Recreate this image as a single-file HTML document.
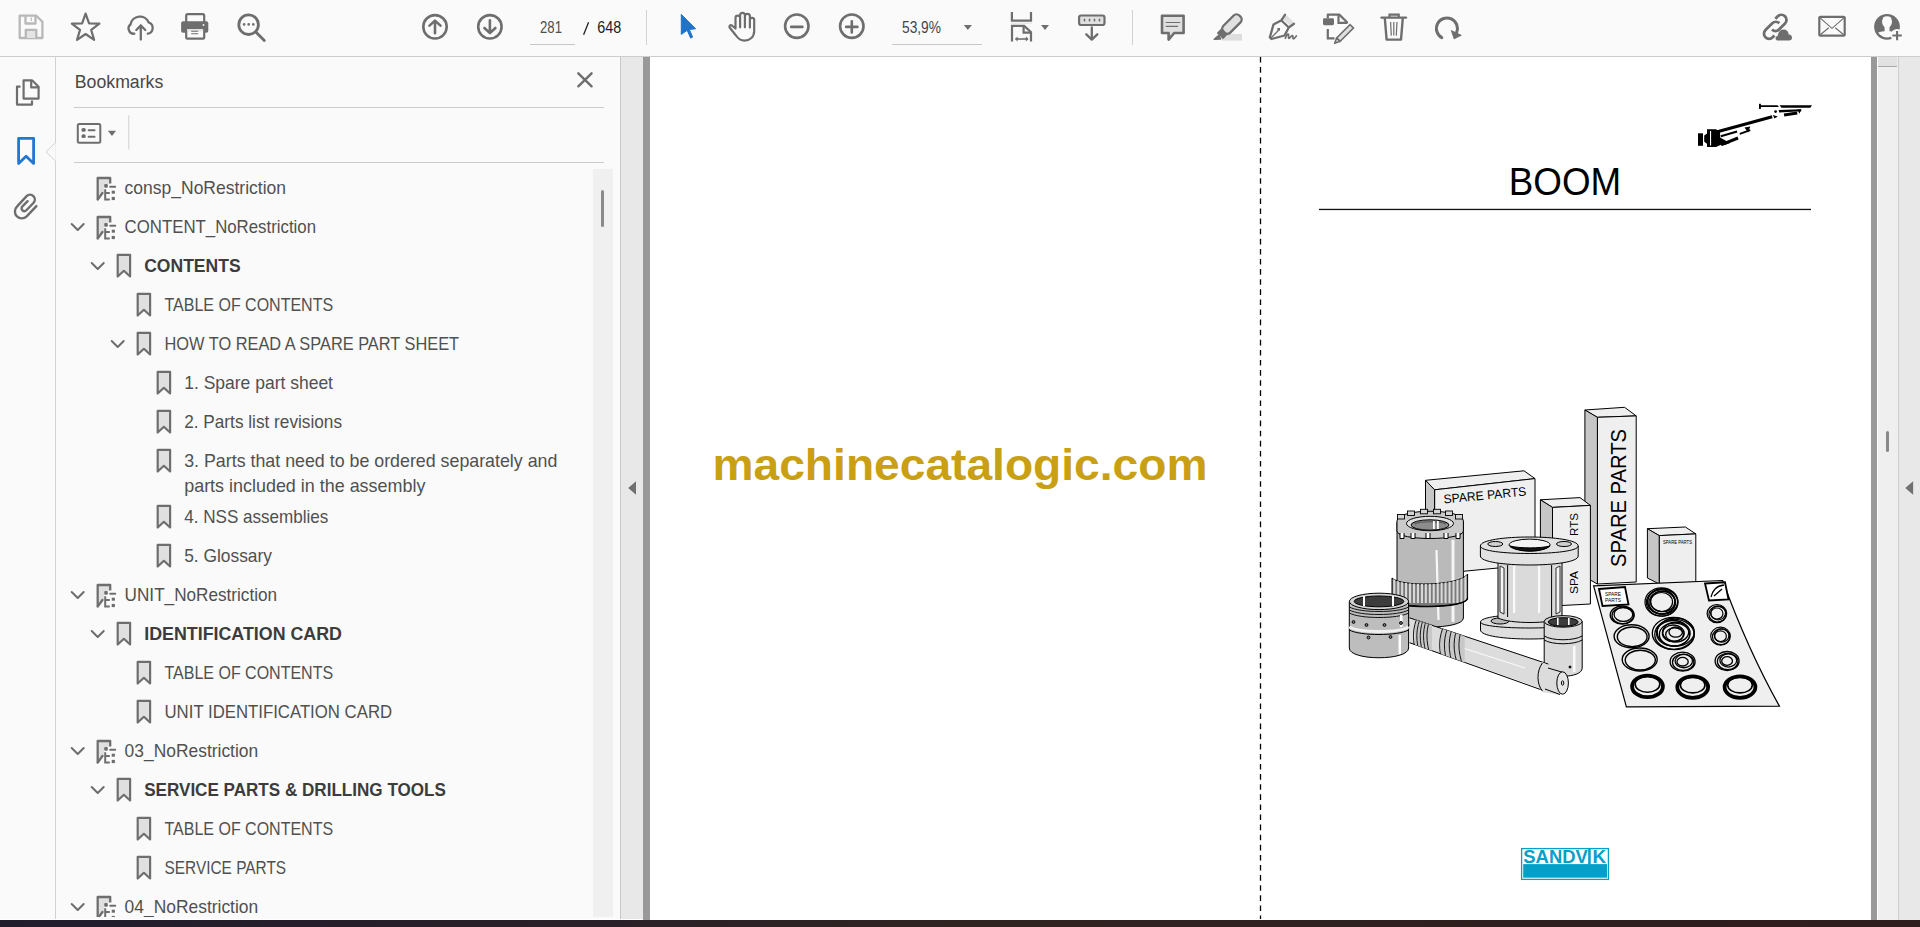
<!DOCTYPE html>
<html><head><meta charset="utf-8"><title>Adobe Acrobat</title>
<style>
html,body{margin:0;padding:0;width:1920px;height:927px;overflow:hidden;background:#fafafa;font-family:"Liberation Sans",sans-serif;}
.a{position:absolute;}
svg text{font-family:"Liberation Sans",sans-serif;}
</style></head><body>
<div class="a" style="left:0;top:0;width:1920px;height:56px;background:#fafafa"></div>
<div class="a" style="left:0;top:56px;width:1920px;height:1px;background:#cdcdcd"></div>
<div class="a" style="left:0;top:57px;width:55px;height:863px;background:#fafafa"></div>
<div class="a" style="left:55px;top:57px;width:1px;height:863px;background:#d2d2d2"></div>
<div class="a" style="left:56px;top:57px;width:564px;height:863px;background:#fafafa"></div>
<div class="a" style="left:593px;top:169px;width:20px;height:748px;background:#f0f0f0"></div>
<div class="a" style="left:601px;top:190px;width:3px;height:37px;border-radius:2px;background:#8a8a8a"></div>
<div class="a" style="left:620px;top:57px;width:1px;height:863px;background:#c8c8c8"></div>
<div class="a" style="left:621px;top:57px;width:22px;height:863px;background:#e8e8e8"></div>
<div class="a" style="left:643px;top:57px;width:7px;height:863px;background:#999999"></div>
<div class="a" style="left:650px;top:57px;width:1221px;height:863px;background:#ffffff"></div>
<div class="a" style="left:1871px;top:57px;width:6px;height:863px;background:#999999"></div>
<div class="a" style="left:1877px;top:57px;width:21px;height:863px;background:#efefef;border-left:1px solid #fff;box-sizing:border-box"></div>
<div class="a" style="left:1878px;top:57px;width:19px;height:9px;background:#e2e2e2;border-bottom:1px solid #a8a8a8"></div>
<div class="a" style="left:1886px;top:431px;width:3px;height:21px;border-radius:2px;background:#888"></div>
<div class="a" style="left:1898px;top:57px;width:1px;height:863px;background:#cdcdcd"></div>
<div class="a" style="left:1899px;top:57px;width:21px;height:863px;background:#e8e8e8"></div>
<div class="a" style="left:0;top:919px;width:643px;height:1px;background:#ffffff"></div>
<div class="a" style="left:0;top:920px;width:1920px;height:7px;background:linear-gradient(90deg,#211d2d 0%,#2a2028 30%,#302421 50%,#2f1d1d 100%)"></div>

<svg class="a" style="left:0;top:0" width="1920" height="927" viewBox="0 0 1920 927">
<g fill="none" stroke="#b8b8b8" stroke-width="2.3" stroke-linejoin="round">
<path d="M19.7,15.7 H36.3 L42.4,21.8 V38 H19.7 Z"/>
<path d="M25.5,15.7 V23.5 H35.5 V15.7"/>
<path d="M25.8,38 V29.8 H36.3 V38" fill="#e4e4e4"/>
<path d="M31.3,17.5 V21" stroke-width="1.2"/>
</g>
<polygon points="85.60,13.60 89.07,23.33 99.39,23.62 91.21,29.92 94.12,39.83 85.60,34.00 77.08,39.83 79.99,29.92 71.81,23.62 82.13,23.33" fill="none" stroke="#6e6e6e" stroke-width="2.2" stroke-linejoin="round"/>
<g fill="none" stroke="#6e6e6e" stroke-width="2.3" stroke-linecap="round">
<path d="M134.3,33.7 A5.2,5.2 0 0 1 130.5,24.5 A9.6,9.6 0 0 1 148.8,22.5 A5.8,5.8 0 0 1 147.8,33.7"/>
<path d="M140.8,39.5 V25.5 M136.3,30 L140.8,25.5 L145.3,30"/>
</g>
<g>
<rect x="186.2" y="14.2" width="18" height="10" rx="1.5" fill="none" stroke="#6e6e6e" stroke-width="2.2"/>
<rect x="181.1" y="21.2" width="27.2" height="11.6" rx="2" fill="#6e6e6e"/>
<rect x="186.2" y="28" width="18" height="10.6" rx="1.2" fill="#fafafa" stroke="#6e6e6e" stroke-width="2.2"/>
<rect x="187.3" y="29" width="15.8" height="2.2" fill="#e2e2e2"/>
<path d="M191.2,31.3 H198.2 M191.2,33.8 H198.2" stroke="#6e6e6e" stroke-width="1.1"/>
<circle cx="203.5" cy="25" r="0.9" fill="#fafafa"/>
</g>
<g fill="none" stroke="#6e6e6e" stroke-width="2.8" stroke-linecap="round">
<circle cx="248.6" cy="24.7" r="9.8"/>
<path d="M255.6,31.7 L264.3,40.5"/>
</g>
<g fill="#6e6e6e"><circle cx="244.1" cy="24.4" r="1.3"/><circle cx="248.7" cy="24.4" r="1.3"/><circle cx="253.3" cy="24.4" r="1.3"/></g>
<g fill="none" stroke="#6e6e6e" stroke-width="2.6" stroke-linecap="round" stroke-linejoin="round">
<circle cx="435" cy="26.8" r="11.7"/>
<path d="M435,33.2 V21 M429.5,25.6 L435,20.6 L440.5,25.6"/>
<circle cx="489.9" cy="26.8" r="11.7"/>
<path d="M489.9,20.4 V32.6 M484.4,28 L489.9,33 L495.4,28"/>
</g>
<text x="540" y="32.8" font-size="15.6" fill="#505050" textLength="22" lengthAdjust="spacingAndGlyphs">281</text>
<rect x="530" y="44" width="45" height="1" fill="#c8c8c8"/>
<path d="M583.6,34.8 L588.6,22.2" stroke="#222" stroke-width="1.3"/>
<text x="597.3" y="32.8" font-size="15.6" fill="#222" textLength="24" lengthAdjust="spacingAndGlyphs">648</text>
<rect x="646" y="10" width="1" height="35" fill="#d2d2d2"/>
<path d="M681.3,14.4 V34.4 L687.2,30.3 L690.6,38.1 L692.6,37.1 L689.3,29.4 L695.6,28.8 Z" fill="#1f73c9" stroke="#1f73c9" stroke-width="1" stroke-linejoin="round"/>
<path d="M735.5,28.3 V17.9 A2.3,2.3 0 0 1 740.1,17.9 V15.3 A2.4,2.4 0 0 1 744.9,15.3 V16.3 A2.5,2.5 0 0 1 749.9,16.3 V20 A2.15,2.15 0 0 1 754.2,20 V31 C754.2,37 750,40.6 744.5,40.6 C740.5,40.6 738,38.5 736,35.5 L729.8,27.8 C728.6,26.3 730.2,24.4 731.9,25.5 L735.5,28.5 M740.1,17.9 V27.3 M744.9,16.3 V27.3 M749.9,20 V27.6" fill="none" stroke="#6e6e6e" stroke-width="2.2" stroke-linejoin="round" stroke-linecap="round"/>
<g fill="none" stroke="#6e6e6e" stroke-width="2.6" stroke-linecap="round">
<circle cx="796.8" cy="26.2" r="11.7"/><path d="M791.2,26.9 H802.4"/>
<circle cx="851.8" cy="26.2" r="11.7"/><path d="M846.2,26.9 H857.4 M851.8,21.3 V32.5"/>
</g>
<text x="902" y="32.8" font-size="15.6" fill="#454545" textLength="39" lengthAdjust="spacingAndGlyphs">53,9%</text>
<path d="M963.8,25 H971.9 L967.85,30 Z" fill="#6e6e6e"/>
<rect x="892" y="44" width="90" height="1" fill="#c8c8c8"/>
<g fill="none" stroke="#6e6e6e" stroke-width="2.2">
<path d="M1011.9,11.9 V20.6 H1031 V11.9"/>
<path d="M1012,41.5 V25.9 H1024.2 L1031,32.2 V41.5"/>
<path d="M1023.6,25.9 V32.6 H1031"/>
<path d="M1015.8,39 H1027.6" stroke-width="1.6"/>
</g>
<path d="M1011,23.2 H1032" stroke="#e0e0e0" stroke-width="1"/>
<path d="M1014.8,39 L1017.6,36.6 V41.4 Z M1028.6,39 L1025.8,36.6 V41.4 Z" fill="#6e6e6e"/>
<path d="M1041,25 H1049 L1045,30 Z" fill="#6e6e6e"/>
<rect x="1079.1" y="15.5" width="25.4" height="9.5" rx="2" fill="#e0e0e0" stroke="#6e6e6e" stroke-width="2.2"/>
<g fill="#6e6e6e"><path d="M1084.5,18.3 L1085.6,20.1 L1084.5,21.9 L1083.4,20.1Z"/><path d="M1089.5,18.3 L1090.6,20.1 L1089.5,21.9 L1088.4,20.1Z"/><path d="M1094.5,18.3 L1095.6,20.1 L1094.5,21.9 L1093.4,20.1Z"/><path d="M1099.5,18.3 L1100.6,20.1 L1099.5,21.9 L1098.4,20.1Z"/></g>
<path d="M1091.8,27.5 V39.6 M1086.3,34.3 L1091.8,39.6 L1097.3,34.3" fill="none" stroke="#6e6e6e" stroke-width="2.3" stroke-linecap="round" stroke-linejoin="round"/>
<rect x="1132" y="10" width="1" height="35" fill="#d2d2d2"/>
<path d="M1162,15.8 H1183.6 V33 H1174.2 L1168.6,39.6 V33 H1162 Z" fill="#e0e0e0" stroke="#6e6e6e" stroke-width="2.6" stroke-linejoin="round"/>
<path d="M1165.7,22.5 H1180.3 M1165.7,26.3 H1178" stroke="#6e6e6e" stroke-width="1.2"/>
<rect x="1221.5" y="34" width="20.5" height="6.6" fill="#dedede"/>
<g transform="rotate(-45 1224 32)">
<rect x="1224" y="27.2" width="22.5" height="9.6" rx="4" fill="#e0e0e0" stroke="#6e6e6e" stroke-width="2.3"/>
<rect x="1218.2" y="27.6" width="6.6" height="8.8" fill="#6e6e6e"/>
</g>
<path d="M1214.2,39.2 L1220.6,39 L1218.8,35.2 Z" fill="#6e6e6e" stroke="#6e6e6e" stroke-width="1.4" stroke-linejoin="round"/>
<path d="M1283,19 L1290.5,26 L1294,22.5 L1286.5,15 Z" fill="#e0e0e0"/>
<path d="M1285,14.8 L1281.5,20.2 L1273.5,24.5 L1269.8,37.5 L1271.5,39 L1284.5,35.5 L1288.8,27.5 L1294,23.8" fill="none" stroke="#6e6e6e" stroke-width="2.3" stroke-linejoin="round" stroke-linecap="round"/>
<path d="M1281.5,20.5 L1288.8,27.5" stroke="#6e6e6e" stroke-width="2.3"/>
<path d="M1271,38 L1278.8,30" stroke="#6e6e6e" stroke-width="1.2"/>
<rect x="1277.4" y="28" width="2.6" height="2.6" fill="#6e6e6e"/>
<path d="M1285.3,38.3 C1286.5,35 1287.6,33.8 1288.5,34.3 C1289.2,35 1287.8,37.6 1288.8,38.3 C1290.3,38.6 1291,35 1292.6,35.8 C1293.8,36.5 1292,38.8 1293.6,38.8 C1295,38.6 1295.5,37 1296.3,36" fill="none" stroke="#6e6e6e" stroke-width="1.7" stroke-linecap="round"/>
<path d="M1327.8,18 V14.6 H1339.3 L1347,22.3 V23.5" fill="none" stroke="#6e6e6e" stroke-width="2.2" stroke-linejoin="round"/>
<path d="M1338.5,14.6 V22.8 H1347" fill="none" stroke="#6e6e6e" stroke-width="2.2"/>
<rect x="1323" y="18.2" width="11" height="7" rx="1.4" fill="#6e6e6e"/>
<path d="M1327.8,29 V38.3 H1334.5" fill="none" stroke="#6e6e6e" stroke-width="2.2"/>
<g transform="rotate(-45 1344 34)"><rect x="1336" y="31.6" width="19" height="4.8" fill="#e0e0e0" stroke="#6e6e6e" stroke-width="1.6"/><path d="M1336,31.6 L1330.8,34 L1336,36.4 Z" fill="#e0e0e0" stroke="#6e6e6e" stroke-width="1.6" stroke-linejoin="round"/></g>
<path d="M1381.5,17.6 H1406" stroke="#6e6e6e" stroke-width="2.4" stroke-linecap="round"/>
<path d="M1389.5,17.2 V14.6 H1398.7 V17.2" fill="none" stroke="#6e6e6e" stroke-width="2.2"/>
<path d="M1384.8,18 L1386.6,39.6 H1401 L1402.8,18" fill="none" stroke="#6e6e6e" stroke-width="2.4" stroke-linejoin="round"/>
<path d="M1390.6,22 L1391.3,35.6 M1393.8,22 V35.6 M1397,22 L1396.3,35.6" stroke="#6e6e6e" stroke-width="1.2"/>
<path d="M1441.8,37.6 A10.5,10.5 0 1 1 1456.6,32.5" fill="none" stroke="#6e6e6e" stroke-width="3" stroke-linecap="round"/>
<path d="M1451.3,30.5 L1461.3,35.3 L1454.1,38.9 Z" fill="#6e6e6e" stroke="#6e6e6e" stroke-width="0.8" stroke-linejoin="round"/>
<g fill="none" stroke="#6e6e6e" stroke-width="2.8">
<path d="M1775.3,18.8 L1777.8,16.3 C1779.8,14.3 1783,14.3 1785,16.3 C1787,18.3 1787,21.5 1785,23.5 L1779,29.5 C1777,31.5 1774,31.5 1772,29.5"/>
<path d="M1779.3,23.3 C1777.3,21.3 1774.3,21.3 1772.3,23.3 L1765.5,30.1 C1763.5,32.1 1763.5,35.3 1765.5,37.3 C1767.5,39.3 1770.7,39.3 1772.7,37.3 L1774.5,35.5"/>
</g>
<path d="M1777.5,40.4 C1774.8,40.4 1775,36.4 1777.6,36.1 C1778,32.5 1780,29.6 1783.8,29.6 C1787,29.6 1788.5,32 1788.7,34.6 C1791,34.5 1792,36.2 1792,37.8 C1792,39.4 1791,40.4 1789,40.4 Z" fill="#6e6e6e"/>
<rect x="1819.3" y="16.9" width="25.4" height="18.8" rx="1" fill="none" stroke="#6e6e6e" stroke-width="2.2"/>
<path d="M1820,17.8 L1832,28.3 L1844,17.8 M1820,35 L1828.8,27.8 M1844,35 L1835.2,27.8" fill="none" stroke="#6e6e6e" stroke-width="1.1"/>
<defs><clipPath id="ucl"><circle cx="1887" cy="26.85" r="10.6"/></clipPath></defs>
<circle cx="1887" cy="26.85" r="12.9" fill="#6e6e6e"/>
<g clip-path="url(#ucl)" fill="#fafafa">
<ellipse cx="1887.05" cy="21.6" rx="5" ry="6.3"/>
<rect x="1884.6" y="25" width="4.9" height="7"/>
<path d="M1874,45 V34.5 C1876.5,32.8 1880,31.6 1884.6,31.2 H1889.5 C1894,31.6 1897.5,32.8 1900,34.5 V45 Z"/>
</g>
<circle cx="1897.1" cy="35.3" r="6.3" fill="#fafafa"/>
<path d="M1897.1,31 V40.2 M1892.4,35.5 H1901.8" stroke="#6e6e6e" stroke-width="2.1"/>
<g fill="none" stroke="#6e6e6e" stroke-width="2.2" stroke-linejoin="round">
<path d="M20.5,86.7 H17 V104.6 H32 V100.5"/>
<path d="M23.6,98.6 V80.3 H32 L38.6,86.7 V98.6 Z" fill="#fafafa"/>
<path d="M31.2,80.3 V87.4 H38.6"/>
</g>
<path d="M17.5,100 H22 V104 H32" stroke="#e0e0e0" stroke-width="0" fill="none"/>
<path d="M18.6,163.4 V138.4 H33.6 V163.4 L26.1,156.3 Z" fill="none" stroke="#2277d0" stroke-width="2.8" stroke-linejoin="round"/>
<path d="M36.4,206.1 L26.68,216.38 A6.9,6.9 0 0 1 16.92,206.62 L26.6,196.2 A4.8,4.8 0 0 1 33.4,203.0 L26.38,210.28 A2.8,2.8 0 0 1 22.42,206.32 L27.6,201.2" fill="none" stroke="#6e6e6e" stroke-width="2.4" stroke-linecap="round"/>
<path d="M55.5,142.5 L46,151.8 L55.5,161" fill="#fafafa" stroke="#d2d2d2" stroke-width="1"/>
<rect x="55.6" y="143.5" width="1.2" height="17" fill="#fafafa"/>

<text x="74.8" y="88" font-size="18.8" fill="#484848" textLength="88.5" lengthAdjust="spacingAndGlyphs">Bookmarks</text>
<path d="M578.3,73.3 L591.6,86.3 M591.6,73.3 L578.3,86.3" stroke="#6e6e6e" stroke-width="2.4" stroke-linecap="round"/>
<rect x="74" y="107" width="530" height="1" fill="#cccccc"/><rect x="74" y="162" width="530" height="1" fill="#cccccc"/>
<rect x="77.8" y="124" width="22.5" height="18.8" rx="1.5" fill="none" stroke="#6e6e6e" stroke-width="2"/>
<rect x="81.5" y="128" width="4.2" height="3.8" rx="1.6" fill="#6e6e6e"/><rect x="81.5" y="134.2" width="4.2" height="3.8" rx="1.6" fill="#6e6e6e"/>
<path d="M88.6,130.3 H94.6 M88.6,136.8 H94.6" stroke="#6e6e6e" stroke-width="1.9" stroke-linecap="round"/>
<path d="M107.9,130.8 H116.1 L112,136 Z" fill="#6e6e6e"/>
<rect x="128.3" y="115.3" width="1" height="34.3" fill="#cfcfcf"/>
<defs><clipPath id="sbclip"><rect x="56" y="165" width="537" height="752"/></clipPath></defs>
<g clip-path="url(#sbclip)">
<g transform="translate(90,172)">
<path d="M9,7 H19 V12 H14 V21.5 L9,27 Z" fill="#e0e0e0"/>
<path d="M7.7,27.6 V6 H20.2 V11.6" fill="none" stroke="#6e6e6e" stroke-width="2.3" stroke-linejoin="round"/>
<path d="M7.7,27.6 L12.4,21" fill="none" stroke="#6e6e6e" stroke-width="2.3" stroke-linecap="round"/>
<rect x="14.2" y="12.1" width="3.6" height="3.6" rx="1" fill="#6e6e6e"/>
<rect x="19.2" y="13.7" width="7" height="2" rx="1" fill="#6e6e6e"/>
<path d="M15.2,17.3 V27.4 H19.8 M15.2,20.9 H19.8" fill="none" stroke="#6e6e6e" stroke-width="2"/>
<rect x="21.7" y="18.7" width="3.2" height="3" fill="#6e6e6e"/>
<rect x="21.7" y="24.9" width="3.2" height="3.2" fill="#6e6e6e"/>
</g>
<text x="124.6" y="194" font-size="18.5" fill="#505050" textLength="161.4" lengthAdjust="spacingAndGlyphs">consp_NoRestriction</text>
<path d="M71.7,224 L77.7,230 L83.7,224" fill="none" stroke="#6e6e6e" stroke-width="2" stroke-linecap="round" stroke-linejoin="round"/>
<g transform="translate(90,211)">
<path d="M9,7 H19 V12 H14 V21.5 L9,27 Z" fill="#e0e0e0"/>
<path d="M7.7,27.6 V6 H20.2 V11.6" fill="none" stroke="#6e6e6e" stroke-width="2.3" stroke-linejoin="round"/>
<path d="M7.7,27.6 L12.4,21" fill="none" stroke="#6e6e6e" stroke-width="2.3" stroke-linecap="round"/>
<rect x="14.2" y="12.1" width="3.6" height="3.6" rx="1" fill="#6e6e6e"/>
<rect x="19.2" y="13.7" width="7" height="2" rx="1" fill="#6e6e6e"/>
<path d="M15.2,17.3 V27.4 H19.8 M15.2,20.9 H19.8" fill="none" stroke="#6e6e6e" stroke-width="2"/>
<rect x="21.7" y="18.7" width="3.2" height="3" fill="#6e6e6e"/>
<rect x="21.7" y="24.9" width="3.2" height="3.2" fill="#6e6e6e"/>
</g>
<text x="124.6" y="233" font-size="18.5" fill="#505050" textLength="191.4" lengthAdjust="spacingAndGlyphs">CONTENT_NoRestriction</text>
<path d="M91.7,263 L97.7,269 L103.7,263" fill="none" stroke="#6e6e6e" stroke-width="2" stroke-linecap="round" stroke-linejoin="round"/>
<path transform="translate(110,249)" d="M7.7,27.5 V5.85 H20.1 V27.5 L13.9,21.8 Z" fill="#e0e0e0" stroke="#6e6e6e" stroke-width="2.2" stroke-linejoin="round"/>
<text x="144.2" y="272" font-size="18.5" font-weight="bold" fill="#3c3c3c" textLength="96.4" lengthAdjust="spacingAndGlyphs">CONTENTS</text>
<path transform="translate(130,288)" d="M7.7,27.5 V5.85 H20.1 V27.5 L13.9,21.8 Z" fill="#e0e0e0" stroke="#6e6e6e" stroke-width="2.2" stroke-linejoin="round"/>
<text x="164.5" y="311" font-size="18.5" fill="#505050" textLength="168.6" lengthAdjust="spacingAndGlyphs">TABLE OF CONTENTS</text>
<path d="M111.7,341 L117.7,347 L123.7,341" fill="none" stroke="#6e6e6e" stroke-width="2" stroke-linecap="round" stroke-linejoin="round"/>
<path transform="translate(130,327)" d="M7.7,27.5 V5.85 H20.1 V27.5 L13.9,21.8 Z" fill="#e0e0e0" stroke="#6e6e6e" stroke-width="2.2" stroke-linejoin="round"/>
<text x="164.5" y="350" font-size="18.5" fill="#505050" textLength="294.6" lengthAdjust="spacingAndGlyphs">HOW TO READ A SPARE PART SHEET</text>
<path transform="translate(150,366)" d="M7.7,27.5 V5.85 H20.1 V27.5 L13.9,21.8 Z" fill="#e0e0e0" stroke="#6e6e6e" stroke-width="2.2" stroke-linejoin="round"/>
<text x="184.2" y="389" font-size="18.5" fill="#505050" textLength="148.8" lengthAdjust="spacingAndGlyphs">1. Spare part sheet</text>
<path transform="translate(150,405)" d="M7.7,27.5 V5.85 H20.1 V27.5 L13.9,21.8 Z" fill="#e0e0e0" stroke="#6e6e6e" stroke-width="2.2" stroke-linejoin="round"/>
<text x="184.2" y="428" font-size="18.5" fill="#505050" textLength="157.8" lengthAdjust="spacingAndGlyphs">2. Parts list revisions</text>
<path transform="translate(150,444)" d="M7.7,27.5 V5.85 H20.1 V27.5 L13.9,21.8 Z" fill="#e0e0e0" stroke="#6e6e6e" stroke-width="2.2" stroke-linejoin="round"/>
<text x="184.2" y="467" font-size="18.5" fill="#505050" textLength="373.2" lengthAdjust="spacingAndGlyphs">3. Parts that need to be ordered separately and</text>
<text x="184.2" y="492" font-size="18.5" fill="#505050" textLength="241.2" lengthAdjust="spacingAndGlyphs">parts included in the assembly</text>
<path transform="translate(150,500)" d="M7.7,27.5 V5.85 H20.1 V27.5 L13.9,21.8 Z" fill="#e0e0e0" stroke="#6e6e6e" stroke-width="2.2" stroke-linejoin="round"/>
<text x="184.2" y="523" font-size="18.5" fill="#505050" textLength="144.2" lengthAdjust="spacingAndGlyphs">4. NSS assemblies</text>
<path transform="translate(150,539)" d="M7.7,27.5 V5.85 H20.1 V27.5 L13.9,21.8 Z" fill="#e0e0e0" stroke="#6e6e6e" stroke-width="2.2" stroke-linejoin="round"/>
<text x="184.2" y="562" font-size="18.5" fill="#505050" textLength="87.8" lengthAdjust="spacingAndGlyphs">5. Glossary</text>
<path d="M71.7,592 L77.7,598 L83.7,592" fill="none" stroke="#6e6e6e" stroke-width="2" stroke-linecap="round" stroke-linejoin="round"/>
<g transform="translate(90,579)">
<path d="M9,7 H19 V12 H14 V21.5 L9,27 Z" fill="#e0e0e0"/>
<path d="M7.7,27.6 V6 H20.2 V11.6" fill="none" stroke="#6e6e6e" stroke-width="2.3" stroke-linejoin="round"/>
<path d="M7.7,27.6 L12.4,21" fill="none" stroke="#6e6e6e" stroke-width="2.3" stroke-linecap="round"/>
<rect x="14.2" y="12.1" width="3.6" height="3.6" rx="1" fill="#6e6e6e"/>
<rect x="19.2" y="13.7" width="7" height="2" rx="1" fill="#6e6e6e"/>
<path d="M15.2,17.3 V27.4 H19.8 M15.2,20.9 H19.8" fill="none" stroke="#6e6e6e" stroke-width="2"/>
<rect x="21.7" y="18.7" width="3.2" height="3" fill="#6e6e6e"/>
<rect x="21.7" y="24.9" width="3.2" height="3.2" fill="#6e6e6e"/>
</g>
<text x="124.6" y="601" font-size="18.5" fill="#505050" textLength="152.5" lengthAdjust="spacingAndGlyphs">UNIT_NoRestriction</text>
<path d="M91.7,631 L97.7,637 L103.7,631" fill="none" stroke="#6e6e6e" stroke-width="2" stroke-linecap="round" stroke-linejoin="round"/>
<path transform="translate(110,617)" d="M7.7,27.5 V5.85 H20.1 V27.5 L13.9,21.8 Z" fill="#e0e0e0" stroke="#6e6e6e" stroke-width="2.2" stroke-linejoin="round"/>
<text x="144.2" y="640" font-size="18.5" font-weight="bold" fill="#3c3c3c" textLength="197.8" lengthAdjust="spacingAndGlyphs">IDENTIFICATION CARD</text>
<path transform="translate(130,656)" d="M7.7,27.5 V5.85 H20.1 V27.5 L13.9,21.8 Z" fill="#e0e0e0" stroke="#6e6e6e" stroke-width="2.2" stroke-linejoin="round"/>
<text x="164.5" y="679" font-size="18.5" fill="#505050" textLength="168.6" lengthAdjust="spacingAndGlyphs">TABLE OF CONTENTS</text>
<path transform="translate(130,695)" d="M7.7,27.5 V5.85 H20.1 V27.5 L13.9,21.8 Z" fill="#e0e0e0" stroke="#6e6e6e" stroke-width="2.2" stroke-linejoin="round"/>
<text x="164.5" y="718" font-size="18.5" fill="#505050" textLength="227.6" lengthAdjust="spacingAndGlyphs">UNIT IDENTIFICATION CARD</text>
<path d="M71.7,748 L77.7,754 L83.7,748" fill="none" stroke="#6e6e6e" stroke-width="2" stroke-linecap="round" stroke-linejoin="round"/>
<g transform="translate(90,735)">
<path d="M9,7 H19 V12 H14 V21.5 L9,27 Z" fill="#e0e0e0"/>
<path d="M7.7,27.6 V6 H20.2 V11.6" fill="none" stroke="#6e6e6e" stroke-width="2.3" stroke-linejoin="round"/>
<path d="M7.7,27.6 L12.4,21" fill="none" stroke="#6e6e6e" stroke-width="2.3" stroke-linecap="round"/>
<rect x="14.2" y="12.1" width="3.6" height="3.6" rx="1" fill="#6e6e6e"/>
<rect x="19.2" y="13.7" width="7" height="2" rx="1" fill="#6e6e6e"/>
<path d="M15.2,17.3 V27.4 H19.8 M15.2,20.9 H19.8" fill="none" stroke="#6e6e6e" stroke-width="2"/>
<rect x="21.7" y="18.7" width="3.2" height="3" fill="#6e6e6e"/>
<rect x="21.7" y="24.9" width="3.2" height="3.2" fill="#6e6e6e"/>
</g>
<text x="124.6" y="757" font-size="18.5" fill="#505050" textLength="133.6" lengthAdjust="spacingAndGlyphs">03_NoRestriction</text>
<path d="M91.7,787 L97.7,793 L103.7,787" fill="none" stroke="#6e6e6e" stroke-width="2" stroke-linecap="round" stroke-linejoin="round"/>
<path transform="translate(110,773)" d="M7.7,27.5 V5.85 H20.1 V27.5 L13.9,21.8 Z" fill="#e0e0e0" stroke="#6e6e6e" stroke-width="2.2" stroke-linejoin="round"/>
<text x="144.2" y="796" font-size="18.5" font-weight="bold" fill="#3c3c3c" textLength="301.7" lengthAdjust="spacingAndGlyphs">SERVICE PARTS &amp; DRILLING TOOLS</text>
<path transform="translate(130,812)" d="M7.7,27.5 V5.85 H20.1 V27.5 L13.9,21.8 Z" fill="#e0e0e0" stroke="#6e6e6e" stroke-width="2.2" stroke-linejoin="round"/>
<text x="164.5" y="835" font-size="18.5" fill="#505050" textLength="168.6" lengthAdjust="spacingAndGlyphs">TABLE OF CONTENTS</text>
<path transform="translate(130,851)" d="M7.7,27.5 V5.85 H20.1 V27.5 L13.9,21.8 Z" fill="#e0e0e0" stroke="#6e6e6e" stroke-width="2.2" stroke-linejoin="round"/>
<text x="164.5" y="874" font-size="18.5" fill="#505050" textLength="121.6" lengthAdjust="spacingAndGlyphs">SERVICE PARTS</text>
<path d="M71.7,904 L77.7,910 L83.7,904" fill="none" stroke="#6e6e6e" stroke-width="2" stroke-linecap="round" stroke-linejoin="round"/>
<g transform="translate(90,891)">
<path d="M9,7 H19 V12 H14 V21.5 L9,27 Z" fill="#e0e0e0"/>
<path d="M7.7,27.6 V6 H20.2 V11.6" fill="none" stroke="#6e6e6e" stroke-width="2.3" stroke-linejoin="round"/>
<path d="M7.7,27.6 L12.4,21" fill="none" stroke="#6e6e6e" stroke-width="2.3" stroke-linecap="round"/>
<rect x="14.2" y="12.1" width="3.6" height="3.6" rx="1" fill="#6e6e6e"/>
<rect x="19.2" y="13.7" width="7" height="2" rx="1" fill="#6e6e6e"/>
<path d="M15.2,17.3 V27.4 H19.8 M15.2,20.9 H19.8" fill="none" stroke="#6e6e6e" stroke-width="2"/>
<rect x="21.7" y="18.7" width="3.2" height="3" fill="#6e6e6e"/>
<rect x="21.7" y="24.9" width="3.2" height="3.2" fill="#6e6e6e"/>
</g>
<text x="124.6" y="913" font-size="18.5" fill="#505050" textLength="133.6" lengthAdjust="spacingAndGlyphs">04_NoRestriction</text>
</g>
<path d="M636,481.3 V494.7 L628.2,488 Z" fill="#707070"/>
<path d="M1913.1,481.3 V494.7 L1905.3,488 Z" fill="#707070"/>
<line x1="1260.5" y1="57" x2="1260.5" y2="919" stroke="#000" stroke-width="1.3" stroke-dasharray="5.6 4.5"/>
<text x="712.5" y="480" font-size="44" font-weight="bold" fill="#c9a013" textLength="495" lengthAdjust="spacingAndGlyphs">machinecatalogic.com</text>
<text x="1508.8" y="195" font-size="39" fill="#000" textLength="112.4" lengthAdjust="spacingAndGlyphs">BOOM</text>
<rect x="1319" y="208.8" width="492" height="1.3" fill="#111"/>
<g fill="#000">
<rect x="1698" y="133.3" width="5" height="12.5"/>
<path d="M1704.2,135.5 L1707,133.5 V129.2 H1716 L1720,132 L1720.5,145 L1716,147.1 H1707 V143.7 L1704.2,141.8 Z"/>
<rect x="1710" y="131" width="1.1" height="14.5" fill="#fff"/>
<path d="M1716,130.4 L1771.8,115.2 L1772.6,118.3 L1716.8,133.4 Z"/>
<path d="M1720.5,135.2 L1736.8,130.6 L1737.4,132.6 L1721.1,137.2 Z"/>
<path d="M1723.5,142.2 L1737.5,136.6 L1738.6,139.4 L1724.6,145 Z"/>
<path d="M1739.5,133 L1750,129.3 L1750.6,131 L1740.1,134.7 Z"/>
<path d="M1744.5,127.4 L1750.3,126.6 L1748,132.6 Z"/>
<path d="M1720,137.5 L1718,143 L1722,146 L1730,143 Z" fill="#000"/>
<rect x="1759" y="103.8" width="1.9" height="5.1"/>
<path d="M1760,105.2 H1777.5 L1779,107 H1760 Z"/>
<path d="M1779.5,105.3 H1812 L1810.3,107.7 H1781.5 Z"/>
<path d="M1778.7,110 L1801,109.2 L1801.4,111.2 L1779.1,112.4 Z"/>
<path d="M1783.8,113.6 L1797,111.6 L1797.5,114.6 L1784.3,116.6 Z"/>
<path d="M1797.5,109.5 L1801.5,109.5 L1799.3,113.8 Z"/>
<circle cx="1775.6" cy="111.6" r="1.4"/>
<path d="M1772.8,115 L1777.8,116.5 L1774.5,118.6 Z"/>
</g>
<g stroke="#000" stroke-width="1" stroke-linejoin="round">
<path d="M1425.5,480.3 L1524,470.8 L1535,478.6 L1434.6,489.8 Z" fill="#efefef"/>
<path d="M1434.6,489.8 L1535,478.6 V564.5 L1434.6,574 Z" fill="#efefef"/>
<path d="M1425.5,480.3 L1434.6,489.8 V574 L1425.5,566 Z" fill="#c6c6c6"/>
<path d="M1584.9,410 L1624.6,407.3 L1636.2,415.9 L1597.4,417.3 Z" fill="#efefef"/>
<path d="M1597.4,417.3 L1636.2,415.9 V582 L1597.4,584 Z" fill="#efefef"/>
<path d="M1584.9,410 L1597.4,417.3 V584 L1584.9,577 Z" fill="#c6c6c6"/>
<path d="M1647.4,528.7 L1685.4,527 L1695.8,533.9 L1659.2,535.6 Z" fill="#efefef"/>
<path d="M1659.2,535.6 L1695.8,533.9 V582 L1659.2,584 Z" fill="#efefef"/>
<path d="M1647.4,528.7 L1659.2,535.6 V584 L1647.4,578 Z" fill="#c6c6c6"/>
<path d="M1540.4,499.8 L1580,497.6 L1590.4,505.4 L1552.5,507.4 Z" fill="#efefef"/>
<path d="M1552.5,507.4 L1590.4,505.4 V604 L1552.5,606 Z" fill="#efefef"/>
<path d="M1540.4,499.8 L1552.5,507.4 V606 L1540.4,599 Z" fill="#c6c6c6"/>
</g>
<text x="1444" y="503.5" font-size="12.5" fill="#000" transform="rotate(-5.5 1444 503.5)" textLength="83" lengthAdjust="spacingAndGlyphs">SPARE PARTS</text>
<text x="0" y="0" font-size="21.5" fill="#000" transform="translate(1626.3,567) rotate(-90)" textLength="138" lengthAdjust="spacingAndGlyphs">SPARE PARTS</text>
<text x="0" y="0" font-size="11.5" fill="#000" transform="translate(1577.8,536) rotate(-90)" textLength="23" lengthAdjust="spacingAndGlyphs">RTS</text>
<text x="0" y="0" font-size="11.5" fill="#000" transform="translate(1577.8,594) rotate(-90)" textLength="23" lengthAdjust="spacingAndGlyphs">SPA</text>
<text x="1663" y="543.5" font-size="5.5" fill="#000" textLength="29" lengthAdjust="spacingAndGlyphs">SPARE PARTS</text>
<path d="M1593.6,585.9 L1722.6,580.5 Q1748,650 1779.4,706.1 L1626.4,706.8 Z" fill="#efefef" stroke="#000" stroke-width="1.2"/>
<g fill="none" stroke="#000">
<path d="M1599,589 L1625,587 L1628.5,604.5 L1602.5,606 Z" stroke-width="1.8" fill="#fff"/>
<text x="1605" y="596" font-size="5" fill="#000" stroke="none" textLength="16" lengthAdjust="spacingAndGlyphs">SPARE</text><text x="1605" y="602" font-size="5" fill="#000" stroke="none" textLength="16" lengthAdjust="spacingAndGlyphs">PARTS</text>
<path d="M1705,583.5 L1725,582.3 L1728.5,599.5 L1709,600.5 Z" stroke-width="1.8" fill="#fff"/>
<path d="M1711,597 C1713,590 1716,586 1724,585 M1714,596 L1722,589" stroke-width="1.3"/>
<ellipse cx="1661.5" cy="602.0" rx="16.50" ry="14.20" fill="none" stroke="#000" stroke-width="1.2"/>
<ellipse cx="1662.1" cy="602.6" rx="15.67" ry="13.49" fill="none" stroke="#000" stroke-width="1.2"/>
<ellipse cx="1662.7" cy="601.4" rx="14.85" ry="12.78" fill="none" stroke="#000" stroke-width="1.2"/>
<ellipse cx="1661.5" cy="602.0" rx="14.03" ry="12.07" fill="none" stroke="#000" stroke-width="1.2"/>
<ellipse cx="1662.1" cy="602.6" rx="13.04" ry="11.22" fill="none" stroke="#000" stroke-width="1.2"/>
<ellipse cx="1662.7" cy="601.4" rx="12.04" ry="10.37" fill="none" stroke="#000" stroke-width="1.2"/>
<ellipse cx="1661.5" cy="602.0" rx="11.06" ry="9.51" fill="none" stroke="#000" stroke-width="1.2"/>
<ellipse cx="1622.2" cy="615.0" rx="12.00" ry="9.00" fill="none" stroke="#000" stroke-width="1.3"/>
<ellipse cx="1622.8" cy="615.6" rx="10.80" ry="8.10" fill="none" stroke="#000" stroke-width="1.3"/>
<ellipse cx="1623.4" cy="614.4" rx="9.36" ry="7.02" fill="none" stroke="#000" stroke-width="1.3"/>
<ellipse cx="1716.9" cy="613.6" rx="9.80" ry="9.00" fill="none" stroke="#000" stroke-width="1.2"/>
<ellipse cx="1717.5" cy="614.2" rx="8.62" ry="7.92" fill="none" stroke="#000" stroke-width="1.2"/>
<ellipse cx="1718.1" cy="613.0" rx="7.45" ry="6.84" fill="none" stroke="#000" stroke-width="1.2"/>
<ellipse cx="1716.9" cy="613.6" rx="6.08" ry="5.58" fill="none" stroke="#000" stroke-width="1.2"/>
<ellipse cx="1631.6" cy="636.2" rx="17.50" ry="11.50" fill="none" stroke="#000" stroke-width="1.4"/>
<ellipse cx="1632.2" cy="636.8" rx="14.88" ry="9.78" fill="none" stroke="#000" stroke-width="1.4"/>
<ellipse cx="1673.3" cy="633.3" rx="21.00" ry="16.00" fill="none" stroke="#000" stroke-width="1.3"/>
<ellipse cx="1674.5" cy="634.5" rx="19.74" ry="15.04" fill="none" stroke="#000" stroke-width="1.3"/>
<ellipse cx="1675.7" cy="632.1" rx="18.48" ry="14.08" fill="none" stroke="#000" stroke-width="1.3"/>
<ellipse cx="1673.3" cy="633.3" rx="16.80" ry="12.80" fill="none" stroke="#000" stroke-width="1.3"/>
<ellipse cx="1674.5" cy="634.5" rx="15.12" ry="11.52" fill="none" stroke="#000" stroke-width="1.3"/>
<ellipse cx="1675.7" cy="632.1" rx="13.02" ry="9.92" fill="none" stroke="#000" stroke-width="1.3"/>
<ellipse cx="1673.3" cy="633.3" rx="10.92" ry="8.32" fill="none" stroke="#000" stroke-width="1.3"/>
<ellipse cx="1674.5" cy="634.5" rx="8.82" ry="6.72" fill="none" stroke="#000" stroke-width="1.3"/>
<ellipse cx="1675.7" cy="632.1" rx="6.72" ry="5.12" fill="none" stroke="#000" stroke-width="1.3"/>
<ellipse cx="1720.5" cy="636.2" rx="9.80" ry="9.00" fill="none" stroke="#000" stroke-width="1.2"/>
<ellipse cx="1721.1" cy="636.8" rx="8.62" ry="7.92" fill="none" stroke="#000" stroke-width="1.2"/>
<ellipse cx="1721.7" cy="635.6" rx="7.25" ry="6.66" fill="none" stroke="#000" stroke-width="1.2"/>
<ellipse cx="1720.5" cy="636.2" rx="5.88" ry="5.40" fill="none" stroke="#000" stroke-width="1.2"/>
<ellipse cx="1639.7" cy="659.5" rx="17.50" ry="11.50" fill="none" stroke="#000" stroke-width="1.4"/>
<ellipse cx="1640.3" cy="660.1" rx="15.05" ry="9.89" fill="none" stroke="#000" stroke-width="1.4"/>
<ellipse cx="1682.6" cy="661.7" rx="12.50" ry="9.50" fill="none" stroke="#000" stroke-width="1.3"/>
<ellipse cx="1683.2" cy="662.3" rx="10.75" ry="8.17" fill="none" stroke="#000" stroke-width="1.3"/>
<ellipse cx="1683.8" cy="661.1" rx="8.75" ry="6.65" fill="none" stroke="#000" stroke-width="1.3"/>
<ellipse cx="1682.6" cy="661.7" rx="5.62" ry="4.28" fill="none" stroke="#000" stroke-width="1.3"/>
<ellipse cx="1727.1" cy="661.0" rx="12.00" ry="9.50" fill="none" stroke="#000" stroke-width="1.3"/>
<ellipse cx="1727.7" cy="661.6" rx="10.32" ry="8.17" fill="none" stroke="#000" stroke-width="1.3"/>
<ellipse cx="1728.3" cy="660.4" rx="8.40" ry="6.65" fill="none" stroke="#000" stroke-width="1.3"/>
<ellipse cx="1727.1" cy="661.0" rx="5.40" ry="4.28" fill="none" stroke="#000" stroke-width="1.3"/>
<ellipse cx="1647.5" cy="686.4" rx="15.40" ry="10.80" fill="none" stroke="#000" stroke-width="3.8"/>
<ellipse cx="1647.5" cy="684.2" rx="12.30" ry="8.00" fill="none" stroke="#000" stroke-width="1.6"/>
<ellipse cx="1692.7" cy="687.1" rx="15.40" ry="10.80" fill="none" stroke="#000" stroke-width="3.8"/>
<ellipse cx="1692.7" cy="684.9" rx="12.30" ry="8.00" fill="none" stroke="#000" stroke-width="1.6"/>
<ellipse cx="1740.0" cy="687.1" rx="15.40" ry="10.80" fill="none" stroke="#000" stroke-width="3.8"/>
<ellipse cx="1740.0" cy="684.9" rx="12.30" ry="8.00" fill="none" stroke="#000" stroke-width="1.6"/>
</g>
<g stroke="#000" stroke-width="1">
<path d="M1397,522 V618 C1397,630 1463.4,630 1463.4,618 V522 Z" fill="#bababa"/>
<path d="M1436.5,550 L1438.5,620" stroke="#f8f8f8" stroke-width="2.2"/><path d="M1453,540 V622" stroke="#f4f4f4" stroke-width="3"/>
<defs><clipPath id="gearcl"><path d="M1392,578 C1400,587 1460,586 1467.6,574 V598 C1467.6,609 1392,609 1392,600 Z"/></clipPath></defs>
<path d="M1392,578 C1400,587 1460,586 1467.6,574 V598 C1467.6,609 1392,609 1392,600 Z" fill="#7a7a7a"/>
<g clip-path="url(#gearcl)">
<rect x="1393.2" y="570" width="2.1" height="33" fill="#d8d8d8" stroke="none"/>
<rect x="1397.2" y="570" width="2.1" height="33" fill="#d8d8d8" stroke="none"/>
<rect x="1401.1" y="570" width="2.1" height="33" fill="#d8d8d8" stroke="none"/>
<rect x="1405.0" y="570" width="2.1" height="33" fill="#d8d8d8" stroke="none"/>
<rect x="1409.0" y="570" width="2.1" height="33" fill="#d8d8d8" stroke="none"/>
<rect x="1413.0" y="570" width="2.1" height="33" fill="#d8d8d8" stroke="none"/>
<rect x="1416.9" y="570" width="2.1" height="33" fill="#d8d8d8" stroke="none"/>
<rect x="1420.9" y="570" width="2.1" height="33" fill="#d8d8d8" stroke="none"/>
<rect x="1424.8" y="570" width="2.1" height="33" fill="#d8d8d8" stroke="none"/>
<rect x="1428.8" y="570" width="2.1" height="33" fill="#d8d8d8" stroke="none"/>
<rect x="1432.7" y="570" width="2.1" height="33" fill="#d8d8d8" stroke="none"/>
<rect x="1436.7" y="570" width="2.1" height="33" fill="#d8d8d8" stroke="none"/>
<rect x="1440.6" y="570" width="2.1" height="33" fill="#d8d8d8" stroke="none"/>
<rect x="1444.5" y="570" width="2.1" height="33" fill="#d8d8d8" stroke="none"/>
<rect x="1448.5" y="570" width="2.1" height="33" fill="#d8d8d8" stroke="none"/>
<rect x="1452.5" y="570" width="2.1" height="33" fill="#d8d8d8" stroke="none"/>
<rect x="1456.4" y="570" width="2.1" height="33" fill="#d8d8d8" stroke="none"/>
<rect x="1460.4" y="570" width="2.1" height="33" fill="#d8d8d8" stroke="none"/>
<rect x="1464.3" y="570" width="2.1" height="33" fill="#d8d8d8" stroke="none"/>
</g>
<path d="M1392,600 C1392,609 1467.6,609 1467.6,598" fill="none" stroke-width="1.5"/>
<path d="M1397,521 C1397,508 1463.4,508 1463.4,521 V531 C1463.4,541 1397,541 1397,531 Z" fill="#cacaca"/>
<ellipse cx="1430.0" cy="523.5" rx="23.50" ry="7.20" fill="#e2e2e2" stroke="#000" stroke-width="1"/>
<ellipse cx="1430.0" cy="525.0" rx="19.00" ry="5.20" fill="#8c8c8c" stroke="#000" stroke-width="1"/>
<path d="M1415,524 C1420,521 1440,521 1446,524" fill="none" stroke="#555" stroke-width="1.2"/>
<rect x="1433" y="521" width="1.8" height="8" fill="#fff" stroke="none"/><rect x="1437" y="521" width="1.8" height="8" fill="#fff" stroke="none"/>
<rect x="1397.5" y="514.5" width="7" height="4.5" fill="#d4d4d4" stroke-width="0.9"/>
<rect x="1407.5" y="511.0" width="7" height="4.5" fill="#d4d4d4" stroke-width="0.9"/>
<rect x="1420.5" y="509.3" width="7" height="4.5" fill="#d4d4d4" stroke-width="0.9"/>
<rect x="1433.5" y="509.3" width="7" height="4.5" fill="#d4d4d4" stroke-width="0.9"/>
<rect x="1445.5" y="511.0" width="7" height="4.5" fill="#d4d4d4" stroke-width="0.9"/>
<rect x="1455.5" y="514.5" width="7" height="4.5" fill="#d4d4d4" stroke-width="0.9"/>
<path d="M1400,533 V538.5 H1404 V533" fill="#fff" stroke-width="1"/>
<path d="M1411,533 V538.5 H1415 V533" fill="#fff" stroke-width="1"/>
<path d="M1426,533 V538.5 H1430 V533" fill="#fff" stroke-width="1"/>
<path d="M1444,533 V538.5 H1448 V533" fill="#fff" stroke-width="1"/>
<path d="M1456,533 V538.5 H1460 V533" fill="#fff" stroke-width="1"/>
</g>
<g stroke="#000" stroke-width="1">
<path d="M1480.5,622 C1480.5,612 1578,612 1578,622 V630 C1578,642 1480.5,642 1480.5,630 Z" fill="#dedede"/>
<path d="M1480.5,622 C1480.5,630 1578,630 1578,622" fill="none"/>
<ellipse cx="1500.0" cy="621.0" rx="9.00" ry="3.00" fill="#bbb" stroke="#000" stroke-width="1"/>
<ellipse cx="1560.0" cy="621.0" rx="9.00" ry="3.00" fill="#bbb" stroke="#000" stroke-width="1"/>
<path d="M1498,560 V618 C1510,624 1550,624 1562,618 V560 Z" fill="#dadada"/>
<path d="M1507.6,565 V617 M1551.6,565 V617" stroke-width="1"/>
<rect x="1513" y="566" width="2.2" height="47" fill="#fafafa" stroke="none"/><rect x="1538" y="566" width="2.2" height="47" fill="#fafafa" stroke="none"/>
<path d="M1500,566 V612 L1504,614 V568 Z M1556,568 V614 L1560,612 V566 Z" fill="#f6f6f6" stroke-width="0.8"/>
<path d="M1480.4,546 C1480.4,534 1578.2,534 1578.2,546 V556 C1578.2,568 1480.4,568 1480.4,556 Z" fill="#e2e2e2"/>
<path d="M1480.4,546 C1480.4,556 1578.2,556 1578.2,546" fill="none"/>
<ellipse cx="1529.6" cy="544.9" rx="20.50" ry="5.80" fill="#f4f4f4" stroke="#000" stroke-width="1"/>
<path d="M1510,546 C1518,553 1542,553 1550,546 C1540,548.5 1520,548.5 1510,546 Z" fill="#111"/>
<ellipse cx="1495.3" cy="544.0" rx="7.50" ry="2.50" fill="#d0d0d0" stroke="#000" stroke-width="1"/>
<ellipse cx="1564.0" cy="544.0" rx="7.50" ry="2.50" fill="#d0d0d0" stroke="#000" stroke-width="1"/>
</g>
<g stroke="#000" stroke-width="1">
<path d="M1544.2,621.4 V668 C1544.2,679 1582.2,679 1582.2,668 V621.4 Z" fill="#dadada"/>
<path d="M1544.2,636 C1552,641 1574,641 1582.2,636 M1544.2,640 C1552,645 1574,645 1582.2,640" fill="none"/>
<rect x="1573" y="646" width="2.5" height="26" fill="#fafafa" stroke="none"/>
<ellipse cx="1563.2" cy="621.4" rx="19.00" ry="5.80" fill="#cfcfcf" stroke="#000" stroke-width="1"/>
<ellipse cx="1563.2" cy="622.0" rx="15.00" ry="4.30" fill="#3c3c3c" stroke="#000" stroke-width="1"/>
<rect x="1557" y="618" width="1.6" height="7" fill="#fff" stroke="none"/><rect x="1568" y="618" width="1.6" height="7" fill="#fff" stroke="none"/>
<circle cx="1570" cy="667" r="1" fill="#000"/>
</g>
<defs><clipPath id="pipecl"><path d="M1409.5,617.8 L1548.4,664.1 L1542.4,690.2 L1409.5,642.7 Z"/></clipPath></defs>
<g stroke="#000" stroke-width="1">
<path d="M1409.5,617.8 L1548.4,664.1 L1545,690 L1409.5,642.7 Z" fill="#dcdcdc" stroke="none"/>
<path d="M1409.5,617.8 L1548.4,664.1 M1409.5,642.7 L1542.4,690.2" fill="none"/>
<path d="M1460,647 L1525,668" stroke="#f8f8f8" stroke-width="1.2"/>
<g clip-path="url(#pipecl)">
<rect x="1414.8" y="614" width="17.200000000000045" height="45" fill="#c8c8c8" stroke="none"/>
<path d="M1418.8,614.0 C1411.8,628.0 1411.8,642.0 1417.8,658.0" fill="none" stroke-width="0.9"/>
<path d="M1422.2,614.0 C1415.2,628.0 1415.2,642.0 1421.2,658.0" fill="none" stroke-width="0.9"/>
<path d="M1425.6,614.0 C1418.6,628.0 1418.6,642.0 1424.6,658.0" fill="none" stroke-width="0.9"/>
<path d="M1428.9,614.0 C1421.9,628.0 1421.9,642.0 1427.9,658.0" fill="none" stroke-width="0.9"/>
<path d="M1432.3,614.0 C1425.3,628.0 1425.3,642.0 1431.3,658.0" fill="none" stroke-width="0.9"/>
<rect x="1441" y="623" width="23.700000000000045" height="45" fill="#c8c8c8" stroke="none"/>
<path d="M1445.0,623.0 C1438.0,637.0 1438.0,651.0 1444.0,667.0" fill="none" stroke-width="0.9"/>
<path d="M1449.8,623.0 C1442.8,637.0 1442.8,651.0 1448.8,667.0" fill="none" stroke-width="0.9"/>
<path d="M1454.6,623.0 C1447.6,637.0 1447.6,651.0 1453.6,667.0" fill="none" stroke-width="0.9"/>
<path d="M1459.5,623.0 C1452.5,637.0 1452.5,651.0 1458.5,667.0" fill="none" stroke-width="0.9"/>
<path d="M1464.3,623.0 C1457.3,637.0 1457.3,651.0 1463.3,667.0" fill="none" stroke-width="0.9"/>
</g>
<path d="M1542,662 C1536,670 1536,684 1542,692 L1560,695 L1568,680 L1550,666 Z" fill="#dcdcdc" stroke="none"/>
<path d="M1542.4,663 C1536.5,671 1536.5,684 1542.4,691" fill="none"/>
<path d="M1548,668 L1565,673 M1545,689 L1560,694.5" fill="none"/>
<ellipse cx="1562.6" cy="683.0" rx="5.80" ry="11.20" fill="#e6e6e6" stroke="#000" stroke-width="1"/>
<ellipse cx="1562.6" cy="683.0" rx="1.20" ry="2.20" fill="none" stroke="#000" stroke-width="1"/>
</g>
<g stroke="#000" stroke-width="1">
<path d="M1349.3,602 V648 C1349.3,661 1408.6,661 1408.6,648 V602 Z" fill="#bdbdbd"/>
<path d="M1349.3,627 C1360,633 1398,633 1408.6,627" fill="none" stroke="#f0f0f0" stroke-width="3"/>
<path d="M1349.3,630 C1360,636 1398,636 1408.6,630" fill="none"/>
<path d="M1349.3,607 C1360,613 1398,613 1408.6,607 M1349.3,610 C1360,616 1398,616 1408.6,610 M1349.3,613 C1360,619 1398,619 1408.6,613" fill="none" stroke-width="0.9"/>
<rect x="1400" y="615" width="2.5" height="12" fill="#fff" stroke="none"/><rect x="1398.5" y="635" width="2.5" height="19" fill="#fff" stroke="none"/>
<ellipse cx="1379.0" cy="601.4" rx="29.60" ry="8.20" fill="#d4d4d4" stroke="#000" stroke-width="1"/>
<ellipse cx="1379.0" cy="601.4" rx="24.80" ry="5.40" fill="#3c3c3c" stroke="#000" stroke-width="1"/>
<rect x="1363" y="596" width="2" height="10" fill="#fff" stroke="none"/><rect x="1392" y="596" width="2" height="10" fill="#fff" stroke="none"/>
<circle cx="1353.5" cy="622" r="1.4" fill="#888"/>
<circle cx="1366.5" cy="625" r="1.4" fill="#888"/>
<circle cx="1384.5" cy="625" r="1.4" fill="#888"/>
<circle cx="1401" cy="623" r="1.4" fill="#888"/>
<circle cx="1368.5" cy="637.5" r="1.4" fill="#888"/>
<circle cx="1390.5" cy="637" r="1.4" fill="#888"/>
</g>
<rect x="1521.6" y="848.6" width="86.8" height="30.8" fill="none" stroke="#05a0c8" stroke-width="1.3"/>
<rect x="1523.2" y="864.1" width="83.8" height="13.6" fill="#05a0c8"/>
<text x="1523.3" y="863.2" font-size="18.5" font-weight="bold" fill="#03a0c7" textLength="64.5" lengthAdjust="spacingAndGlyphs">SANDV</text>
<rect x="1588.2" y="849" width="2.5" height="15.5" fill="#03a0c7"/>
<text x="1592.4" y="863.2" font-size="18.5" font-weight="bold" fill="#03a0c7" textLength="13.6" lengthAdjust="spacingAndGlyphs">K</text>
</svg>
</body></html>
